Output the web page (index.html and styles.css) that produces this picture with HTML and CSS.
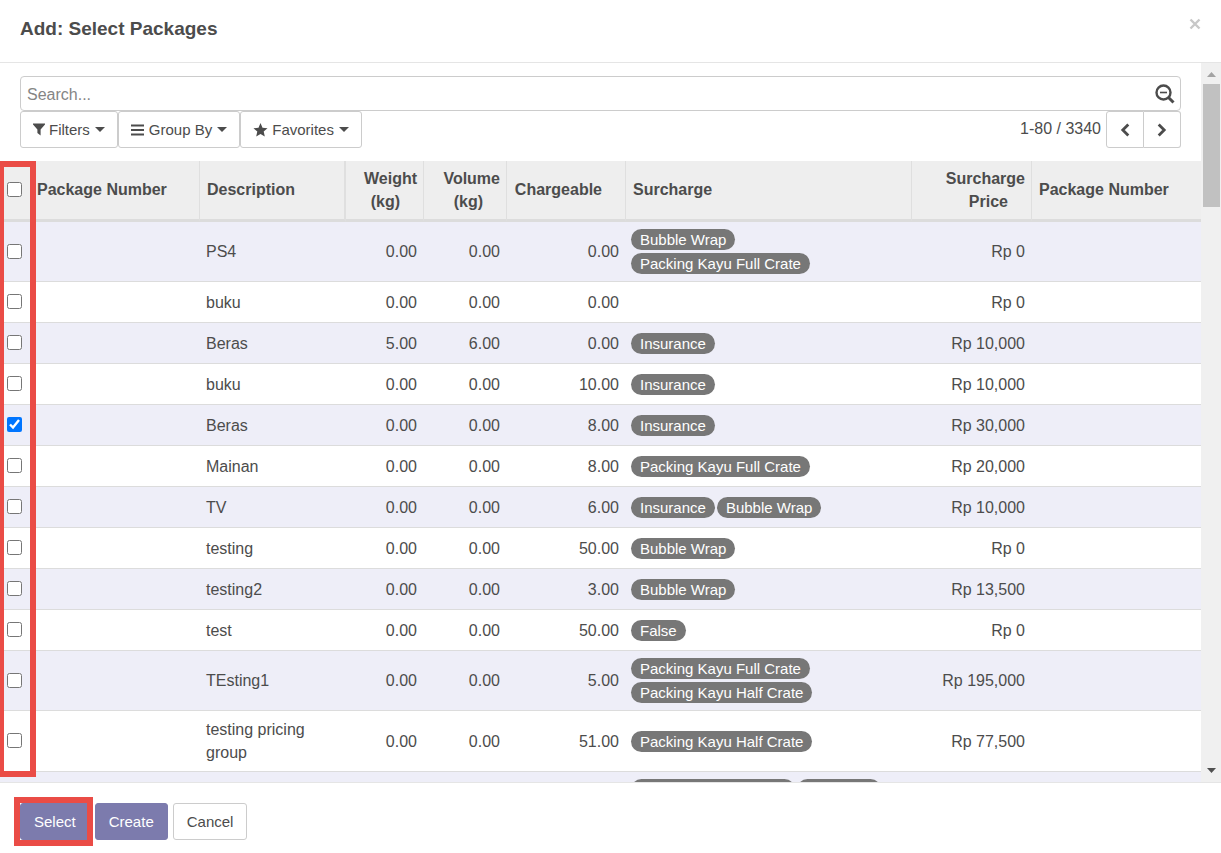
FILE: index.html
```html
<!DOCTYPE html>
<html lang="en">
<head>
<meta charset="utf-8">
<title>Add: Select Packages</title>
<link rel="stylesheet" href="styles.css">
</head>
<body>
<div class="dialog" role="dialog" aria-labelledby="dialog-title">
  <header class="dialog-header">
    <h1 class="dialog-title" id="dialog-title">Add: Select Packages</h1>
    <button class="close" type="button" aria-label="Close"><svg width="12" height="12" viewBox="0 0 12 12"><path d="M1.500 1.500l9 9M10.500 1.500l-9 9" fill="none" stroke="#c8c8c8" stroke-width="2.400"/></svg></button>
  </header>

  <div class="dialog-body">
    <main class="content">
      <div class="search">
        <input class="search-input" type="text" placeholder="Search..." aria-label="Search">
        <button class="search-toggle" type="button" aria-label="Advanced search"><svg width="20" height="20" viewBox="0 0 20 20"><circle cx="8.5" cy="8.5" r="7" fill="none" stroke="#4c4c4c" stroke-width="2.4"/><path d="M5 8.5h7" stroke="#4c4c4c" stroke-width="1.6"/><path d="M13.5 13.5l5 5" stroke="#4c4c4c" stroke-width="3"/></svg></button>
      </div>

      <div class="toolbar">
        <div class="filters">
          <button class="btn" type="button"><svg width="12" height="13" viewBox="0 0 12 13"><path d="M0 .5h12v1L7.6 6.4V12.500L4.400 10V6.400L0 1.500z" fill="#4c4c4c"/></svg>Filters<span class="caret"></span></button>
          <button class="btn" type="button"><svg width="14" height="12" viewBox="0 0 14 12"><path d="M0 1.500h13M0 6h13M0 10.500h13" stroke="#4c4c4c" stroke-width="2"/></svg>Group By<span class="caret"></span></button>
          <button class="btn" type="button"><svg width="15" height="14" viewBox="0 0 15 14"><path d="M7.500 0l2 4.700 5 .5-3.800 3.400 1.100 5L7.500 11l-4.300 2.600 1.100-5L.5 5.200l5-.5z" fill="#4c4c4c"/></svg>Favorites<span class="caret"></span></button>
        </div>
        <div class="pager">
          <span class="pager-text">1-80 / 3340</span>
          <button class="btn pager-prev" type="button" aria-label="Previous"><svg width="10" height="14" viewBox="0 0 10 14"><path d="M8.300 1.500L2.800 7l5.500 5.500" fill="none" stroke="#4c4c4c" stroke-width="2.800"/></svg></button>
          <button class="btn pager-next" type="button" aria-label="Next"><svg width="10" height="14" viewBox="0 0 10 14"><path d="M1.700 1.500L7.200 7l-5.500 5.500" fill="none" stroke="#4c4c4c" stroke-width="2.800"/></svg></button>
        </div>
      </div>

      <div class="table-area">
        <table class="packages">
          <colgroup>
            <col class="c-check"><col class="c-package"><col class="c-description"><col class="c-weight"><col class="c-volume"><col class="c-chargeable"><col><col class="c-price"><col class="c-last">
          </colgroup>
          <thead>
            <tr>
              <th class="check"><input type="checkbox" aria-label="Select all"></th>
              <th class="package">Package Number</th>
              <th class="description">Description</th>
              <th class="num">Weight (kg)<span class="sort"></span></th>
              <th class="num">Volume (kg)<span class="sort"></span></th>
              <th class="num">Chargeable<span class="sort"></span></th>
              <th>Surcharge</th>
              <th class="num">Surcharge Price<span class="sort"></span></th>
              <th>Package Number</th>
            </tr>
          </thead>
          <tbody>
            <tr><td class="check"><input type="checkbox" aria-label="PS4"></td><td></td><td>PS4</td><td class="num">0.00</td><td class="num">0.00</td><td class="num">0.00</td><td class="tags"><div class="tag-list stacked"><span class="tag">Bubble Wrap</span><span class="tag">Packing Kayu Full Crate</span></div></td><td class="num">Rp 0</td><td></td></tr>
            <tr><td class="check"><input type="checkbox" aria-label="buku"></td><td></td><td>buku</td><td class="num">0.00</td><td class="num">0.00</td><td class="num">0.00</td><td class="tags"></td><td class="num">Rp 0</td><td></td></tr>
            <tr><td class="check"><input type="checkbox" aria-label="Beras"></td><td></td><td>Beras</td><td class="num">5.00</td><td class="num">6.00</td><td class="num">0.00</td><td class="tags"><div class="tag-list"><span class="tag">Insurance</span></div></td><td class="num">Rp 10,000</td><td></td></tr>
            <tr><td class="check"><input type="checkbox" aria-label="buku"></td><td></td><td>buku</td><td class="num">0.00</td><td class="num">0.00</td><td class="num">10.00</td><td class="tags"><div class="tag-list"><span class="tag">Insurance</span></div></td><td class="num">Rp 10,000</td><td></td></tr>
            <tr><td class="check"><input type="checkbox" aria-label="Beras" checked></td><td></td><td>Beras</td><td class="num">0.00</td><td class="num">0.00</td><td class="num">8.00</td><td class="tags"><div class="tag-list"><span class="tag">Insurance</span></div></td><td class="num">Rp 30,000</td><td></td></tr>
            <tr><td class="check"><input type="checkbox" aria-label="Mainan"></td><td></td><td>Mainan</td><td class="num">0.00</td><td class="num">0.00</td><td class="num">8.00</td><td class="tags"><div class="tag-list"><span class="tag">Packing Kayu Full Crate</span></div></td><td class="num">Rp 20,000</td><td></td></tr>
            <tr><td class="check"><input type="checkbox" aria-label="TV"></td><td></td><td>TV</td><td class="num">0.00</td><td class="num">0.00</td><td class="num">6.00</td><td class="tags"><div class="tag-list"><span class="tag">Insurance</span><span class="tag">Bubble Wrap</span></div></td><td class="num">Rp 10,000</td><td></td></tr>
            <tr><td class="check"><input type="checkbox" aria-label="testing"></td><td></td><td>testing</td><td class="num">0.00</td><td class="num">0.00</td><td class="num">50.00</td><td class="tags"><div class="tag-list"><span class="tag">Bubble Wrap</span></div></td><td class="num">Rp 0</td><td></td></tr>
            <tr><td class="check"><input type="checkbox" aria-label="testing2"></td><td></td><td>testing2</td><td class="num">0.00</td><td class="num">0.00</td><td class="num">3.00</td><td class="tags"><div class="tag-list"><span class="tag">Bubble Wrap</span></div></td><td class="num">Rp 13,500</td><td></td></tr>
            <tr><td class="check"><input type="checkbox" aria-label="test"></td><td></td><td>test</td><td class="num">0.00</td><td class="num">0.00</td><td class="num">50.00</td><td class="tags"><div class="tag-list"><span class="tag">False</span></div></td><td class="num">Rp 0</td><td></td></tr>
            <tr><td class="check"><input type="checkbox" aria-label="TEsting1"></td><td></td><td>TEsting1</td><td class="num">0.00</td><td class="num">0.00</td><td class="num">5.00</td><td class="tags"><div class="tag-list stacked"><span class="tag">Packing Kayu Full Crate</span><span class="tag">Packing Kayu Half Crate</span></div></td><td class="num">Rp 195,000</td><td></td></tr>
            <tr><td class="check"><input type="checkbox" aria-label="testing pricing group"></td><td></td><td>testing pricing group</td><td class="num">0.00</td><td class="num">0.00</td><td class="num">51.00</td><td class="tags"><div class="tag-list"><span class="tag">Packing Kayu Half Crate</span></div></td><td class="num">Rp 77,500</td><td></td></tr>
            <tr><td></td><td></td><td></td><td></td><td></td><td></td><td class="tags tags-top"><div class="tag-list"><span class="tag tag-long"></span><span class="tag tag-short"></span></div></td><td></td><td></td></tr>
          </tbody>
        </table>
        <div class="mark mark-column"></div>
      </div>
    </main>
    <div class="scrollbar" aria-hidden="true">
      <svg width="9" height="5" viewBox="0 0 9 5"><path d="M0 5L4.500 0 9 5z" fill="#a3a3a3"/></svg>
      <div class="track"><div class="thumb"></div></div>
      <svg width="9" height="5" viewBox="0 0 9 5"><path d="M0 0h9L4.500 5z" fill="#505050"/></svg>
    </div>
  </div>

  <footer class="dialog-footer">
    <div class="marked"><button class="btn btn-primary" type="button">Select</button><div class="mark mark-button"></div></div>
    <button class="btn btn-primary" type="button">Create</button>
    <button class="btn" type="button">Cancel</button>
  </footer>
</div>
</body>
</html>
```

FILE: styles.css
```css
* { box-sizing: border-box; }

body {
  margin: 0;
  background: #fff;
  color: #4c4c4c;
  font: 16px/23px "Liberation Sans", Arial, sans-serif;
}

svg { display: block; flex: none; }

.dialog {
  display: flex;
  flex-direction: column;
  height: 100vh;
}

.dialog-header {
  display: flex;
  align-items: flex-start;
  justify-content: space-between;
  padding: 17px 20px 22px;
  border-bottom: 1px solid #e5e5e5;
}

.dialog-title { margin: 0; font-size: 19px; line-height: 23px; }

.close {
  padding: 1px 0;
  border: 0;
  background: none;
}

.dialog-body {
  display: flex;
  flex: 1;
  min-height: 0;
}

.content {
  display: flex;
  flex: 1;
  flex-direction: column;
  min-width: 0;
  padding-top: 13px;
}

.search {
  display: flex;
  align-items: center;
  height: 35px;
  margin: 0 20px;
  border: 1px solid #ccc;
  border-radius: 4px;
}

.search-input {
  flex: 1;
  min-width: 0;
  padding: 1px 6px 0;
  border: 0;
  outline: 0;
  background: none;
  color: inherit;
  font: inherit;
}

.search-input::placeholder { color: #858585; }

.search-toggle {
  padding: 0 5px;
  border: 0;
  background: none;
}

.toolbar {
  display: flex;
  justify-content: space-between;
  margin: 0 20px 13px;
}

.filters, .pager { display: flex; }

.btn {
  display: flex;
  align-items: center;
  justify-content: center;
  gap: 4px;
  height: 37px;
  padding: 0 13px;
  border: 1px solid #ccc;
  border-radius: 3px;
  background: #fff;
  color: #4c4c4c;
  font: 15px/20px "Liberation Sans", Arial, sans-serif;
}

.filters .btn { padding: 0 12px; }

.btn-primary {
  border-color: #7c7bad;
  background: #7c7bad;
  color: #fff;
}

.caret {
  margin-left: 1px;
  border: 5px solid transparent;
  border-top-color: #4c4c4c;
  border-bottom: 0;
}

.pager-text { padding: 6px 5px 0 0; }
.pager-prev { width: 38px; border-radius: 3px 0 0 3px; }
.pager-next { width: 37px; border-left: 0; border-radius: 0 3px 3px 0; }

.table-area {
  position: relative;
  flex: 1;
  min-height: 0;
  overflow: hidden;
}

.packages {
  width: 100%;
  border-collapse: separate;
  border-spacing: 0;
  table-layout: fixed;
}

.c-check { width: 30px; }
.c-package { width: 170px; }
.c-description { width: 146px; }
.c-weight { width: 78px; }
.c-volume { width: 83px; }
.c-chargeable { width: 119px; }
.c-price { width: 120px; }
.c-last { width: 169px; }

th {
  height: 61px;
  padding: 5px 6px 6px 7px;
  border-right: 1px solid #dfdfdf;
  border-bottom: 3px solid #dcdcdc;
  background: #eee;
  text-align: left;
}

th.check, th:last-child { border-right: 0; }
th.description { border-right-width: 2px; }

td {
  height: 41px;
  padding: 7px 6px;
  border-bottom: 1px solid #dcdcdc;
}

tbody tr:nth-child(odd) { background: #eeeef8; }

.num { text-align: right; }
td.num { padding-right: 7px; }
th.num { padding-right: 6px; }
.sort { display: inline-block; width: 17px; }

th.check, td.check { padding: 0 7px 1px; line-height: 0; }
.check input { width: 15px; height: 15px; margin: 0; }

td.tags { padding-left: 5px; }
td.tags-top { vertical-align: top; }

.tag-list {
  display: flex;
  flex-wrap: wrap;
  gap: 3px 2px;
}

.stacked { flex-direction: column; align-items: flex-start; }

.tag {
  height: 21px;
  padding: 0 9px;
  border-radius: 11px;
  background: #777;
  color: #fff;
  font-size: 15px;
  line-height: 21px;
}

.tag-long { width: 164px; }
.tag-short { width: 84px; }

.mark {
  position: absolute;
  border: 6px solid #ea4c46;
  pointer-events: none;
}

.mark-column { top: 0; bottom: 5px; left: -2px; width: 38px; }
.mark-button { inset: -6px -3px -6px -6px; }
.marked { position: relative; }

.scrollbar {
  display: flex;
  flex-direction: column;
  align-items: center;
  width: 20px;
  padding: 9px 0;
  background: #f0f0f0;
}

.track { flex: 1; width: 17px; padding-top: 7px; }
.thumb { height: 18%; background: #c1c1c1; }

.dialog-footer {
  display: flex;
  gap: 5px;
  padding: 20px 20px 13px;
  border-top: 1px solid #e5e5e5;
}
```
